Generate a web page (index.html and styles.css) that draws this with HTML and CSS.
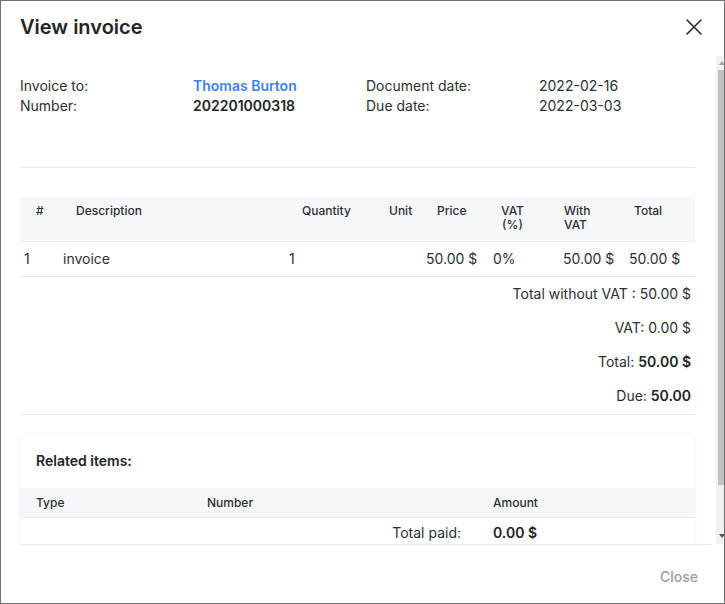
FILE: index.html
```html
<!DOCTYPE html>
<html lang="en">
<head>
<meta charset="utf-8">
<title>View invoice</title>
<link rel="stylesheet" href="styles.css">
</head>
<body>
<div class="dialog">
  <div class="dialog-header">
    <h1 class="dialog-title">View invoice</h1>
    <button class="close-x" aria-label="Close">
      <svg width="16" height="16" viewBox="0 0 16 16"><path d="M1 1L15 15M15 1L1 15" stroke="#2b2b2b" stroke-width="1.6" fill="none" stroke-linecap="round"/></svg>
    </button>
  </div>
  <div class="dialog-main">
    <div class="dialog-body">
      <div class="info">
        <div class="info-label">Invoice to:</div>
        <div class="info-value link">Thomas Burton</div>
        <div class="info-label">Document date:</div>
        <div class="info-plain">2022-02-16</div>
        <div class="info-label">Number:</div>
        <div class="info-value">202201000318</div>
        <div class="info-label">Due date:</div>
        <div class="info-plain">2022-03-03</div>
      </div>
      <hr class="sep sep-top">
      <table class="items">
        <colgroup>
          <col class="w-num"><col class="w-desc"><col class="w-qty"><col class="w-unit"><col class="w-price"><col class="w-vat"><col class="w-with"><col class="w-total">
        </colgroup>
        <thead>
          <tr>
            <th class="h-num">#</th>
            <th class="h-desc">Description</th>
            <th class="h-qty">Quantity</th>
            <th class="h-unit">Unit</th>
            <th class="h-price">Price</th>
            <th class="h-vat"><span class="stack">VAT<br>(%)</span></th>
            <th class="h-with"><span class="stack">With<br>VAT</span></th>
            <th class="h-total">Total</th>
          </tr>
        </thead>
        <tbody>
          <tr>
            <td>1</td>
            <td>invoice</td>
            <td>1</td>
            <td></td>
            <td>50.00 $</td>
            <td>0%</td>
            <td>50.00 $</td>
            <td>50.00 $</td>
          </tr>
        </tbody>
      </table>
      <div class="totals">
        <div class="total-row">Total without VAT : 50.00 $</div>
        <div class="total-row">VAT: 0.00 $</div>
        <div class="total-row">Total: <b>50.00 $</b></div>
        <div class="total-row">Due: <b>50.00</b></div>
      </div>
      <hr class="sep sep-bottom">
      <div class="card">
        <div class="card-title">Related items:</div>
        <table class="related">
          <colgroup><col class="r-type"><col class="r-number"><col class="r-amount"></colgroup>
          <thead>
            <tr><th>Type</th><th>Number</th><th>Amount</th></tr>
          </thead>
          <tbody>
            <tr><td></td><td class="paid-label">Total paid:</td><td class="paid-value">0.00 $</td></tr>
          </tbody>
        </table>
      </div>
    </div>
    <div class="scrollbar" aria-hidden="true">
      <div class="sb-btn sb-up"><span class="tri-up"></span></div>
      <div class="sb-track"><div class="sb-thumb"></div></div>
      <div class="sb-btn sb-down"><span class="tri-down"></span></div>
    </div>
  </div>
  <div class="dialog-footer">
    <button class="btn-close">Close</button>
  </div>
</div>
</body>
</html>
```
FILE: styles.css
```css
* { box-sizing: border-box; }
html, body { margin: 0; padding: 0; background: #fff; }
body {
  font-family: Inter, "Noto Sans", sans-serif;
  font-size: 14px;
  line-height: 20px;
  color: #2d2f33;
}
.dialog {
  width: 725px;
  height: 604px;
  border: 1px solid #707070;
  overflow: hidden;
  display: flex;
  flex-direction: column;
  background: #fff;
}
.dialog-header {
  height: 55px;
  flex: none;
  display: flex;
  align-items: flex-start;
  justify-content: space-between;
  padding: 14px 22px 0 19px;
}
.dialog-title {
  margin: 0;
  font-size: 20px;
  line-height: 24px;
  font-weight: 600;
  color: #222426;
}
.close-x {
  margin-top: 4px;
  padding: 0;
  border: 0;
  background: none;
  width: 16px;
  height: 16px;
  display: block;
}
.close-x svg { display: block; }

.dialog-main {
  flex: 1;
  min-height: 0;
  display: flex;
}
.dialog-body {
  flex: 1;
  min-width: 0;
  overflow: hidden;
  padding: 20px 20px 20px 19px;
}

.scrollbar {
  width: 8px;
  flex: none;
  background: #f1f1f1;
  display: flex;
  flex-direction: column;
}
.sb-btn {
  height: 14px;
  flex: none;
  display: flex;
  justify-content: flex-end;
  padding-right: 0;
}
.sb-up { align-items: flex-start; padding-top: 5px; }
.sb-down { align-items: flex-start; padding-top: 4px; }
.tri-up, .tri-down {
  display: block;
  width: 0;
  height: 0;
  border-left: 3.5px solid transparent;
  border-right: 3.5px solid transparent;
  margin-right: -1px;
}
.tri-up { border-bottom: 4px solid #a3a3a3; }
.tri-down { border-top: 4px solid #505050; }
.sb-track {
  flex: 1;
  padding-left: 2px;
}
.sb-thumb {
  height: 415px;
  background: #c1c1c1;
}

.info {
  display: grid;
  grid-template-columns: 173px 173px 173px auto;
  width: 675px;
}
.info-label { color: #2d2f33; }
.info-value { font-weight: 600; color: #222426; }
.info-value.link { color: #3f80ee; }
.info-plain { color: #2d2f33; }

.sep {
  border: 0;
  border-top: 1px solid #e8e9ec;
  margin: 0;
  width: 675px;
}
.sep-top { margin-top: 51px; }
.sep-bottom { margin-top: 1px; }

.items {
  width: 675px;
  margin-top: 29px;
  border-collapse: collapse;
  table-layout: fixed;
}
.w-num { width: 39px; }
.w-desc { width: 226px; }
.w-qty { width: 81px; }
.w-unit { width: 56px; }
.w-price { width: 67px; }
.w-vat { width: 70px; }
.w-with { width: 66px; }
.w-total { width: 70px; }
.items th {
  background: #f6f7fa;
  font-size: 12px;
  line-height: 14px;
  font-weight: 500;
  color: #2d2f33;
  text-align: left;
  vertical-align: top;
  padding: 7px 0 9px 0;
  height: 44px;
  border-bottom: 1px solid #e8e9ec;
  white-space: nowrap;
}
.items th.h-num { padding-left: 16px; }
.items th.h-desc { padding-left: 17px; }
.items th.h-qty { padding-left: 17px; }
.items th.h-unit { padding-left: 23px; }
.items th.h-price { padding-left: 15px; }
.items th.h-vat { padding-left: 12px; }
.items th.h-with { padding-left: 5px; }
.items th.h-total { padding-left: 9px; }
.stack { display: inline-block; text-align: center; }
.h-with .stack { text-align: left; }
.items td {
  padding: 7px 4px;
  line-height: 20px;
  border-bottom: 1px solid #e8e9ec;
  white-space: nowrap;
}

.totals { width: 675px; }
.total-row {
  text-align: right;
  padding: 7px 4px 7px 0;
  line-height: 20px;
}
.total-row b { font-weight: 600; color: #222426; }

.card {
  width: 675px;
  margin-top: 20px;
  border-radius: 8px;
  box-shadow: 0 0 5px rgba(0, 0, 0, 0.07);
  background: #fff;
  padding-bottom: 16px;
}
.card-title {
  padding: 16px 16px 17px;
  font-weight: 600;
  color: #222426;
  line-height: 20px;
}
.related {
  width: 100%;
  border-collapse: collapse;
  table-layout: fixed;
}
.r-type { width: 171px; }
.r-number { width: 286px; }
.related th {
  background: #f6f7fa;
  font-size: 12px;
  line-height: 16px;
  font-weight: 500;
  text-align: left;
  padding: 7px 16px 6px;
  border-bottom: 1px solid #e8e9ec;
}
.related td {
  padding: 5px 16px 8px;
  line-height: 20px;
}
.paid-label { text-align: right; }
.paid-value { font-weight: 600; color: #222426; }

.dialog-footer {
  flex: none;
  height: 59px;
  margin: 0 13px 0 19px;
  border-top: 1px solid #e8e9ec;
  display: flex;
  justify-content: flex-end;
  align-items: center;
  padding: 6px 13px 0 0;
}
.btn-close {
  border: 0;
  background: none;
  padding: 0;
  font-family: Inter, "Noto Sans", sans-serif;
  font-size: 14px;
  line-height: 20px;
  font-weight: 500;
  color: #9c9c9c;
}
```
